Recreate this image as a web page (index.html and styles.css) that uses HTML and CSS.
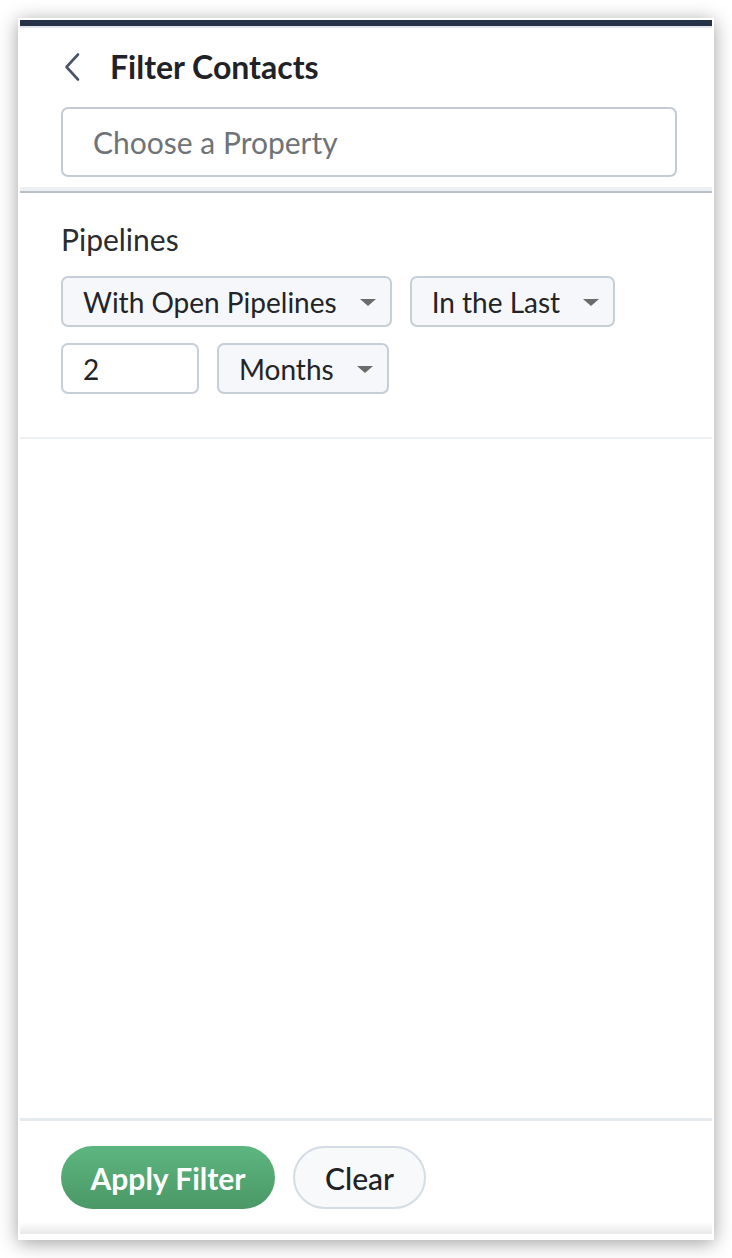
FILE: index.html
```html
<!DOCTYPE html>
<html lang="en">
<head>
<meta charset="utf-8">
<title>Filter Contacts</title>
<link rel="stylesheet" href="styles.css">
</head>
<body>
<div class="window">
  <div class="inner">
    <div class="topbar"></div>
    <header class="header">
      <div class="title-row">
        <span class="back" aria-label="Back">
          <svg width="18" height="30" viewBox="0 0 18 30"><path d="M15 2.5 L3.5 15 L15 27.5" fill="none" stroke="#4b5567" stroke-width="2.6" stroke-linecap="round" stroke-linejoin="round"/></svg>
        </span>
        <h1 class="title">Filter Contacts</h1>
      </div>
      <div class="search">Choose a Property</div>
    </header>
    <section class="filter">
      <div class="label">Pipelines</div>
      <div class="controls">
        <div class="select"><span>With Open Pipelines</span><i class="caret"></i></div>
        <div class="select"><span>In the Last</span><i class="caret"></i></div>
        <div class="num">2</div>
        <div class="select"><span>Months</span><i class="caret"></i></div>
      </div>
    </section>
    <div class="spacer"></div>
    <footer class="footer">
      <button class="btn btn-apply">Apply Filter</button>
      <button class="btn btn-clear">Clear</button>
    </footer>
    <div class="bottom-fade"></div>
  </div>
</div>
</body>
</html>
```
FILE: styles.css
```css
* { box-sizing: border-box; }
html, body { margin: 0; padding: 0; background: #ffffff; }
body {
  font-family: Lato, "Open Sans", "Liberation Sans", sans-serif;
  color: #222428;
  padding: 18px;
}
.window {
  width: 696px;
  height: 1222px;
  background: #ffffff;
  padding: 2px 2px 6px 2px;
  box-shadow: 0 3px 18px rgba(0, 0, 0, 0.38);
}
.inner {
  height: 100%;
  display: flex;
  flex-direction: column;
  background: #ffffff;
}
.topbar {
  height: 6px;
  background: #263248;
  border-bottom: 2px solid #e3e6ea;
  flex: none;
  box-sizing: content-box;
}
.header {
  padding: 19px 35px 14px 41px;
  border-bottom: 2px solid #b9c0c8;
  box-shadow: inset 0 -4px 0 #eef1f4;
}
.title-row {
  display: flex;
  align-items: center;
  height: 40px;
}
.back {
  display: flex;
  width: 18px;
  margin-left: 2px;
  margin-right: 29px;
}
.title {
  margin: 0;
  font-size: 32px;
  font-weight: 700;
  color: #1f2227;
  line-height: 40px;
}
.search {
  margin-top: 20px;
  height: 70px;
  border: 2px solid #c3cbd5;
  border-radius: 7px;
  padding-left: 30px;
  display: flex;
  align-items: center;
  font-size: 30px;
  color: #6e7378;
}
.filter {
  padding: 28px 35px 43px 41px;
  border-bottom: 2px solid #eef1f4;
}
.label {
  font-size: 30px;
  line-height: 36px;
  color: #2a2c30;
  margin-bottom: 19px;
}
.controls {
  display: flex;
  flex-wrap: wrap;
  column-gap: 18px;
  row-gap: 16px;
}
.select, .num {
  height: 51px;
  border: 2px solid #c6ced8;
  border-radius: 7px;
  display: flex;
  align-items: center;
  font-size: 28px;
  color: #222428;
}
.select {
  background: #f5f7fa;
  padding: 0 14px 0 20px;
  gap: 23px;
}
.num {
  width: 138px;
  background: #ffffff;
  padding-left: 20px;
}
.caret {
  width: 0;
  height: 0;
  border-left: 8px solid transparent;
  border-right: 8px solid transparent;
  border-top: 7px solid #6b6b6b;
  margin-top: 2px;
}
.spacer { flex: 1; }
.footer {
  border-top: 3px solid #e5eaee;
  padding: 25px 41px 13px 41px;
  display: flex;
  gap: 18px;
}
.btn {
  height: 63px;
  border-radius: 32px;
  font-family: Lato, "Open Sans", "Liberation Sans", sans-serif;
  font-size: 30px;
  cursor: pointer;
}
.btn-apply {
  width: 214px;
  border: none;
  color: #ffffff;
  font-weight: 700;
  background: linear-gradient(to bottom, #5db67f, #4a9866);
}
.btn-clear {
  width: 133px;
  border: 2px solid #d4dce5;
  background: #f7f9fb;
  color: #1f2227;
  font-weight: 500;
}
.bottom-fade {
  height: 12px;
  flex: none;
  background: linear-gradient(to bottom, rgba(0,0,0,0), rgba(0,0,0,0.09));
}
```
